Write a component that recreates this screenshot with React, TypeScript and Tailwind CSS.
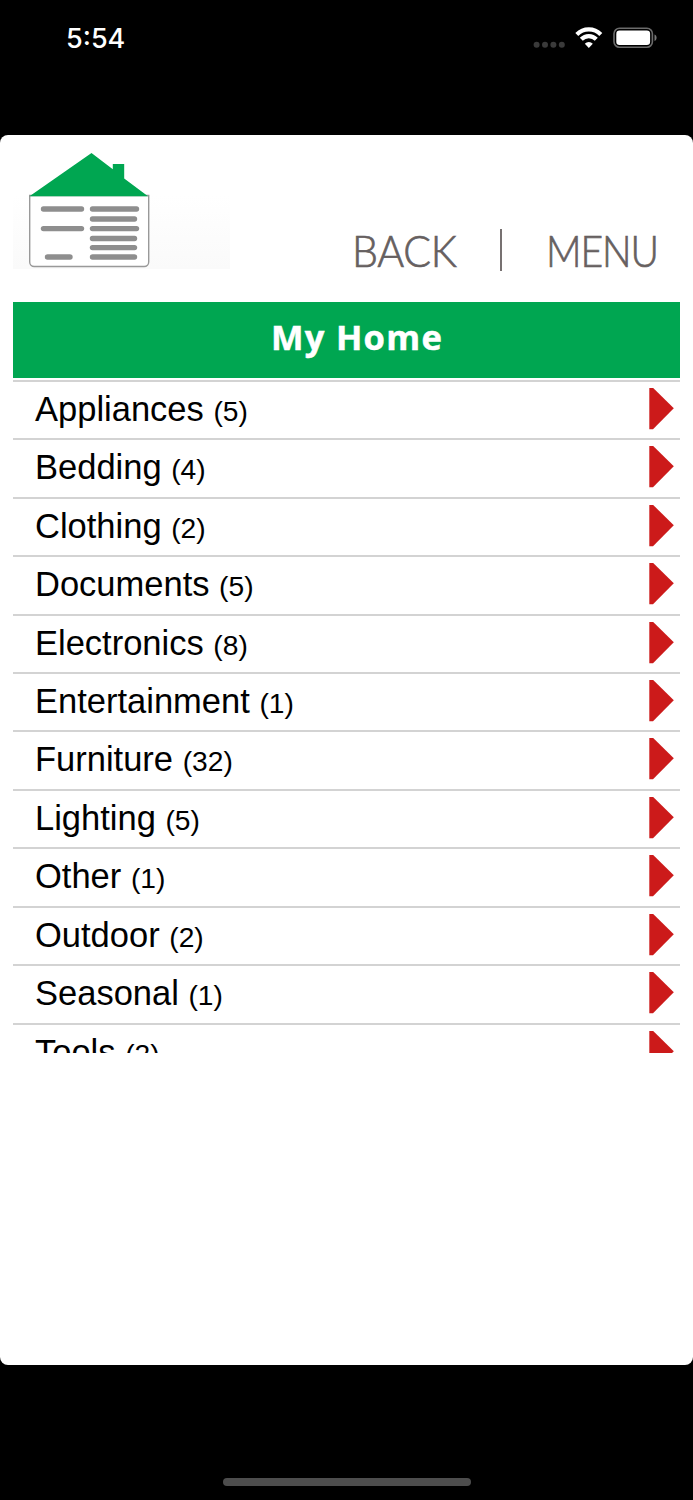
const categories = [
  { name: "Appliances", count: 5 },
  { name: "Bedding", count: 4 },
  { name: "Clothing", count: 2 },
  { name: "Documents", count: 5 },
  { name: "Electronics", count: 8 },
  { name: "Entertainment", count: 1 },
  { name: "Furniture", count: 32 },
  { name: "Lighting", count: 5 },
  { name: "Other", count: 1 },
  { name: "Outdoor", count: 2 },
  { name: "Seasonal", count: 1 },
  { name: "Tools", count: 2 },
];

function StatusBar() {
  return (
    <div className="flex h-[135px] shrink-0 items-start justify-between pl-[66px] pr-[35px] pt-[22px] text-white">
      <span className="font-['Inter',sans-serif] text-[27px] font-medium leading-[33px]">
        5:54
      </span>
      <div className="flex items-start pt-[5px]">
        <svg width="32" height="22" viewBox="0 0 32 22" fill="#3a3a3a">
          <circle cx="3.6" cy="17.8" r="3" />
          <circle cx="12" cy="17.8" r="3" />
          <circle cx="20.4" cy="17.8" r="3" />
          <circle cx="28.8" cy="17.8" r="3" />
        </svg>
        <svg
          className="ml-[10px]"
          width="28"
          height="22"
          viewBox="0 0 28 22"
          fill="none"
          stroke="white"
          strokeWidth="4.2"
        >
          <path d="M1.8 7.4a17 17 0 0 1 24 0" />
          <path d="M6.3 12.2a10.5 10.5 0 0 1 15 0" />
          <path
            d="M13.8 21l-4-4.2a5.5 5.5 0 0 1 8 0z"
            fill="white"
            stroke="none"
          />
        </svg>
        <svg className="ml-[10px]" width="45" height="22" viewBox="0 0 45 22">
          <rect
            x="1"
            y="1.2"
            width="38.4"
            height="19"
            rx="5.5"
            fill="none"
            stroke="#6b6b6b"
            strokeWidth="1.6"
          />
          <rect x="3.3" y="3.6" width="33.8" height="14.4" rx="3.3" fill="white" />
          <path d="M41.5 7.4c2.8 1.2 2.8 5.4 0 6.6z" fill="#777" />
        </svg>
      </div>
    </div>
  );
}

function Logo() {
  return (
    <svg
      width="217"
      height="120"
      viewBox="13 150 217 120"
      className="shrink-0"
    >
      <defs>
        <linearGradient id="logo-shade" x1="0" y1="0" x2="0" y2="1">
          <stop offset="0" stopColor="#ffffff" />
          <stop offset="1" stopColor="#fafafa" />
        </linearGradient>
      </defs>
      <rect x="13" y="195" width="217" height="74" fill="url(#logo-shade)" />
      <path
        d="M29.7 195.5V262a4.5 4.5 0 0 0 4.5 4.5h110a4.5 4.5 0 0 0 4.5-4.5v-66.5z"
        fill="white"
        stroke="#999"
        strokeWidth="1.4"
      />
      <path
        d="M91.5 153l21.3 16.3v-5.3h11.4v14.6l23.8 17.7H29.5z"
        fill="#00a651"
      />
      <g stroke="#8e8e8e" strokeWidth="5.4" strokeLinecap="round">
        <path d="M43.5 209H81.5" />
        <path d="M43.5 228.6H81.5" />
        <path d="M47.5 257H70" />
        <path d="M92.5 209H136.5" />
        <path d="M92.5 219H134.5" />
        <path d="M92.5 228.6H136.5" />
        <path d="M92.5 238.5H134.5" />
        <path d="M92.5 247.6H134.5" />
        <path d="M92.5 257H134.5" />
      </g>
    </svg>
  );
}

function Header() {
  return (
    <header className="flex h-[167px] shrink-0 items-start pl-[13px] pt-[15px]">
      <Logo />
      <nav className="ml-[122px] flex pt-[75px] font-['Lato',sans-serif] text-[43px] font-light leading-[52px] text-[#666060] [-webkit-text-stroke:0.7px_#666060]">
        <button className="w-[120px] shrink-0 origin-left scale-x-[0.955] text-left tracking-[-0.3px]">
          BACK
        </button>
        <span className="ml-[28px] mt-[4px] h-[42px] w-[2px] shrink-0 bg-[#777171]" />
        <button className="ml-[44px] w-[125px] shrink-0 origin-left scale-x-[0.91] text-left tracking-[-1.2px]">
          MENU
        </button>
      </nav>
    </header>
  );
}

function CategoryRow({ name, count }: { name: string; count: number }) {
  return (
    <li className="flex h-[58.45px] shrink-0 items-start border-t-2 border-[#d3d3d3] pl-[22px] pr-[6px]">
      <span className="flex-1 text-[34.5px] leading-[55px] text-black">
        {name} <span className="text-[28.2px]">({count})</span>
      </span>
      <svg
        className="mt-[5px]"
        width="25"
        height="43"
        viewBox="0 0 25 43"
        fill="#cc1a1a"
      >
        <path d="M0.3 1H4.2L24.8 21.3L4 42.2H0.3z" />
      </svg>
    </li>
  );
}

export default function App() {
  return (
    <div className="flex h-[1500px] w-[693px] flex-col overflow-hidden bg-black font-['Liberation_Sans',Arial,sans-serif]">
      <StatusBar />
      <main className="flex h-[1230px] shrink-0 flex-col overflow-hidden rounded-[8px] bg-white">
        <Header />
        <h1 className="mx-[13px] h-[75.5px] shrink-0 bg-[#00a651] pl-[21px] text-center font-['Open_Sans',sans-serif] text-[34.5px] font-bold leading-[70px] tracking-[1.3px] text-white [-webkit-text-stroke:0.5px_white]">
          My Home
        </h1>
        <ul className="mx-[13px] mt-[2.3px] flex h-[673px] shrink-0 flex-col overflow-hidden">
          {categories.map((category) => (
            <CategoryRow key={category.name} {...category} />
          ))}
        </ul>
      </main>
      <div className="mx-auto mt-[113px] h-[8px] w-[248px] rounded-full bg-[#4d4d4d]" />
    </div>
  );
}
